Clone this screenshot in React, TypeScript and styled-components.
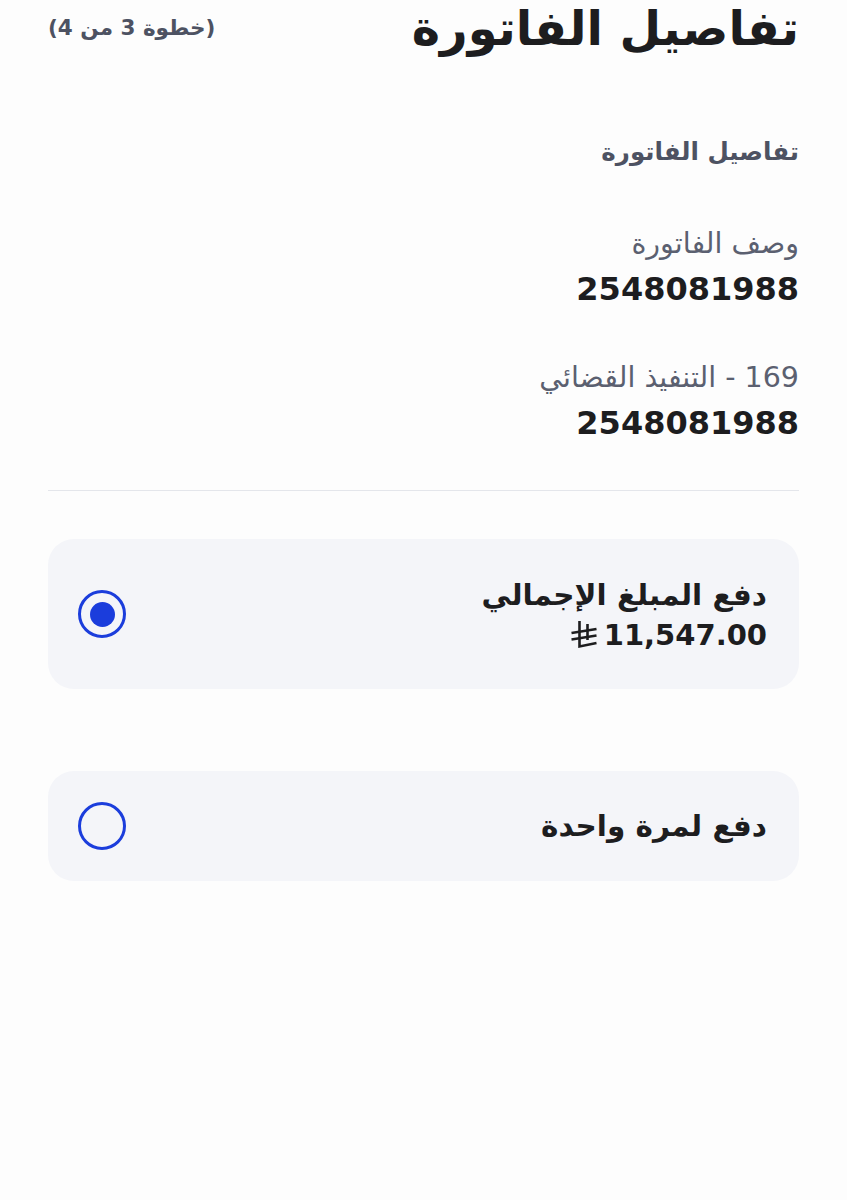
import React from "react";
import styled, { createGlobalStyle } from "styled-components";

const Global = createGlobalStyle`
  html, body {
    margin: 0;
    padding: 0;
    background: #fdfdfd;
  }
  body {
    font-family: "DejaVu Sans", "Noto Sans", sans-serif;
    color: #1d1d1f;
  }
`;

const Page = styled.main`
  width: 847px;
  min-height: 1200px;
  box-sizing: border-box;
  padding: 0 48px;
  direction: rtl;
  overflow: hidden;
`;

const Header = styled.header`
  display: flex;
  justify-content: space-between;
  align-items: flex-start;
`;

const Title = styled.h1`
  margin: 0;
  font-size: 48px;
  line-height: 56px;
  font-weight: 700;
  color: #1d1d1f;
`;

const Step = styled.span`
  margin-top: 14px;
  font-size: 21.5px;
  line-height: 28px;
  font-weight: 700;
  color: #4d5262;
`;

const Section = styled.section`
  display: flex;
  flex-direction: column;
  align-items: flex-start;
  padding-top: 79px;
`;

const SectionTitle = styled.h2`
  margin: 0 0 57px;
  font-size: 24.5px;
  line-height: 34px;
  font-weight: 700;
  color: #4d5262;
`;

const Field = styled.div`
  display: flex;
  flex-direction: column;
  gap: 7px;
  margin-bottom: 51px;

  &:last-child {
    margin-bottom: 47px;
  }
`;

const Label = styled.span`
  font-size: 28.5px;
  line-height: 36px;
  color: #5b6070;
`;

const Value = styled.span`
  font-size: 32px;
  line-height: 40px;
  font-weight: 700;
  color: #1d1d1f;
`;

const Divider = styled.hr`
  margin: 0 0 48px;
  border: none;
  border-top: 1.5px solid #e4e6eb;
`;

const Options = styled.div`
  display: flex;
  flex-direction: column;
  gap: 82px;
`;

const Card = styled.label<{ $tall?: boolean }>`
  display: flex;
  align-items: center;
  justify-content: space-between;
  box-sizing: border-box;
  height: ${(p) => (p.$tall ? 150 : 110)}px;
  padding: 0 32px 0 30px;
  border-radius: 26px;
  background: #f4f5f9;
  cursor: pointer;
`;

const CardText = styled.div`
  display: flex;
  flex-direction: column;
  gap: 1px;
`;

const CardTitle = styled.span`
  font-size: 29.5px;
  line-height: 40px;
  font-weight: 700;
  color: #1d1d1f;
`;

const Amount = styled.span`
  display: inline-flex;
  align-items: center;
  gap: 6px;
  font-size: 29px;
  line-height: 38px;
  font-weight: 700;
  color: #1d1d1f;
`;

const Radio = styled.span<{ $checked?: boolean }>`
  position: relative;
  flex: none;
  width: 48px;
  height: 48px;
  box-sizing: border-box;
  border-radius: 50%;
  border: 3.5px solid #1b3ddc;
  &::after {
    content: "";
    position: absolute;
    inset: 8.5px;
    border-radius: 50%;
    background: #1b3ddc;
    display: ${(p) => (p.$checked ? "block" : "none")};
  }
`;

/* Saudi riyal sign */
const RiyalSign = () => (
  <svg width="28" height="29" viewBox="0 0 27 29" fill="none" stroke="#1d1d1f" strokeWidth="2.6" strokeLinecap="butt" strokeLinejoin="miter">
    <path d="M9 1 V26.5 L26 23" />
    <path d="M17 4 V20" />
    <path d="M1 13 L26 9" />
    <path d="M1 19.5 L26 15.5" />
  </svg>
);

export default function App() {
  return (
    <>
      <Global />
      <Page>
        <Header>
          <Title>تفاصيل الفاتورة</Title>
          <Step>(خطوة 3 من 4)</Step>
        </Header>

        <Section>
          <SectionTitle>تفاصيل الفاتورة</SectionTitle>
          <Field>
            <Label>وصف الفاتورة</Label>
            <Value>2548081988</Value>
          </Field>
          <Field>
            <Label>169 - التنفيذ القضائي</Label>
            <Value>2548081988</Value>
          </Field>
        </Section>

        <Divider />

        <Options>
          <Card $tall>
            <CardText>
              <CardTitle>دفع المبلغ الإجمالي</CardTitle>
              <Amount>
                <span dir="ltr">11,547.00</span>
                <RiyalSign />
              </Amount>
            </CardText>
            <Radio $checked />
          </Card>
          <Card>
            <CardText>
              <CardTitle>دفع لمرة واحدة</CardTitle>
            </CardText>
            <Radio />
          </Card>
        </Options>
      </Page>
    </>
  );
}
